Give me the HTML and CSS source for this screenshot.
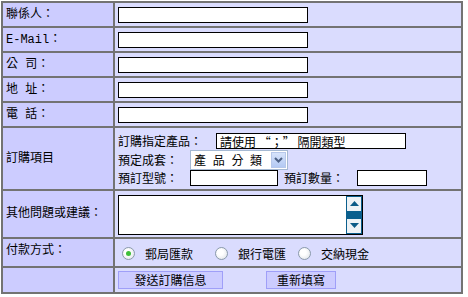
FILE: index.html
```html
<!DOCTYPE html>
<html lang="zh-Hant">
<head>
    <meta charset="UTF-8">
    <title>訂購表單</title>
    <link rel="stylesheet" href="styles.css">
</head>
<body>
    <table class="order-form">
        <tr>
            <td class="label">聯係人：</td>
            <td class="field"><input type="text" class="text-input wide"></td>
        </tr>
        <tr>
            <td class="label">E-Mail：</td>
            <td class="field"><input type="text" class="text-input wide"></td>
        </tr>
        <tr>
            <td class="label">公&nbsp;司：</td>
            <td class="field"><input type="text" class="text-input wide"></td>
        </tr>
        <tr>
            <td class="label">地&nbsp;址：</td>
            <td class="field"><input type="text" class="text-input wide"></td>
        </tr>
        <tr>
            <td class="label">電&nbsp;話：</td>
            <td class="field"><input type="text" class="text-input wide"></td>
        </tr>
        <tr>
            <td class="label">訂購項目</td>
            <td class="field items">
                <div class="item-line">
                    <span class="item-name">訂購指定產品：</span>
                    <input type="text" class="text-input product" value="請使用 “；” 隔開類型">
                </div>
                <div class="item-line">
                    <span class="item-name short">預定成套：</span>
                    <div class="dropdown">
                        <span class="dropdown-text">產 品 分 類</span>
                        <span class="dropdown-arrow">
                            <svg width="9" height="6" viewBox="0 0 9 6"><path d="M1 1 L4.5 4.5 L8 1" fill="none" stroke="#4d6185" stroke-width="2"/></svg>
                        </span>
                    </div>
                </div>
                <div class="item-line">
                    <span class="item-name short">預訂型號：</span>
                    <input type="text" class="text-input model">
                    <span class="item-name qty-label">預訂數量：</span>
                    <input type="text" class="text-input qty">
                </div>
            </td>
        </tr>
        <tr class="notes-row">
            <td class="label">其他問題或建議：</td>
            <td class="field">
                <div class="notes">
                    <textarea class="notes-text"></textarea>
                    <div class="scrollbar">
                        <span class="scroll-btn"><svg width="9" height="5" viewBox="0 0 9 5"><path d="M0 5 L4.5 0 L9 5 Z" fill="#0b5b86"/></svg></span>
                        <span class="scroll-btn"><svg width="9" height="5" viewBox="0 0 9 5"><path d="M0 0 L4.5 5 L9 0 Z" fill="#0b5b86"/></svg></span>
                    </div>
                </div>
            </td>
        </tr>
        <tr class="pay-row">
            <td class="label">付款方式：</td>
            <td class="field">
                <div class="pay-options">
                    <label class="pay-option first"><span class="radio checked"></span>郵局匯款</label>
                    <label class="pay-option"><span class="radio"></span>銀行電匯</label>
                    <label class="pay-option"><span class="radio"></span>交納現金</label>
                </div>
            </td>
        </tr>
        <tr class="btn-row">
            <td class="label"></td>
            <td class="field">
                <div class="buttons">
                    <button class="form-btn send">發送訂購信息</button>
                    <button class="form-btn reset">重新填寫</button>
                </div>
            </td>
        </tr>
    </table>
</body>
</html>
```

FILE: styles.css
```css
body {
    margin: 1px;
    font-family: "Liberation Mono", "Noto Sans CJK TC", monospace;
    font-size: 12px;
    color: #000;
    background: #fff;
}
.order-form {
    width: 462px;
    border: 1px solid #737373;
    border-spacing: 0;
}
.order-form td {
    border: 1px solid #737373;
    height: 23px;
    padding: 0;
}
.label {
    width: 107px;
    background-color: #ccccff;
    padding-left: 3px !important;
    line-height: 16px;
}
.field {
    background-color: #dadcfe;
    padding-left: 3px !important;
}
.text-input {
    box-sizing: border-box;
    height: 16px;
    border: 1px solid #000;
    padding: 0 3px;
    margin: 0;
    font-family: "Noto Sans CJK TC", sans-serif;
    font-size: 12px;
    background: #fff;
    display: block;
}
.wide {
    width: 190px;
}
.items {
    padding-top: 5px !important;
    padding-bottom: 3px !important;
}
.item-line {
    display: flex;
    align-items: center;
    line-height: 16px;
}
.item-name {
    font-family: "Noto Sans CJK TC", sans-serif;
    width: 98px;
}
.item-name.short {
    width: 72px;
}
.product {
    width: 190px;
    line-height: 14px;
}
.dropdown {
    box-sizing: border-box;
    display: flex;
    align-items: center;
    width: 98px;
    height: 20px;
    margin: 1px 0 0;
    border: 1px solid #a5b9d3;
    background: #fff;
}
.dropdown-text {
    flex: 1;
    padding-left: 3px;
    letter-spacing: 2px;
    word-spacing: 0;
    white-space: nowrap;
    overflow: hidden;
    font-family: "Noto Sans CJK TC", sans-serif;
}
.dropdown-arrow {
    display: flex;
    align-items: center;
    justify-content: center;
    flex: none;
    width: 15px;
    height: 16px;
    margin-right: 1px;
    background: linear-gradient(#d6e3fb, #b3c9f3);
    border: 1px solid #b7c8ea;
    box-sizing: border-box;
}
.model {
    width: 88px;
    margin-right: 6px;
}
.qty-label {
    width: 73px;
}
.qty {
    width: 70px;
}
.notes-row td {
    height: 46px;
}
.notes {
    display: flex;
    width: 245px;
    height: 40px;
    box-sizing: border-box;
    border: 1px solid #000;
    margin-top: 1px;
}
.notes-text {
    flex: 1;
    border: none;
    margin: 0;
    padding: 0;
    resize: none;
    background: #fff;
}
.scrollbar {
    width: 16px;
    background: #0b5f8d;
    display: flex;
    flex-direction: column;
    justify-content: space-between;
    padding: 1px;
    box-sizing: border-box;
}
.scroll-btn {
    display: flex;
    align-items: center;
    justify-content: center;
    height: 14px;
    background: #eef2f5;
}
.pay-row td {
    height: 23px;
}
.pay-row .label {
    vertical-align: top;
    padding-top: 4px !important;
}
.pay-options {
    display: flex;
    align-items: center;
    padding-left: 4px;
    padding-top: 2px;
    font-family: "Noto Sans CJK TC", sans-serif;
}
.pay-option {
    display: flex;
    align-items: center;
    margin-right: 12px;
}
.pay-option.first {
    margin-right: 22px;
}
.radio {
    box-sizing: border-box;
    width: 13px;
    height: 13px;
    border-radius: 50%;
    border: 1px solid #8a9aab;
    background: radial-gradient(circle at 40% 40%, #fff 30%, #d9dde3 100%);
    margin-right: 10px;
    display: flex;
    align-items: center;
    justify-content: center;
}
.radio.checked::after {
    content: "";
    width: 5px;
    height: 5px;
    border-radius: 50%;
    background: #3fbf3a;
}
.btn-row td {
    height: 24px;
}
.buttons {
    display: flex;
    gap: 43px;
}
.form-btn {
    box-sizing: border-box;
    height: 18px;
    padding: 0;
    border: 1px solid #9f9ff8;
    background: #ccccff;
    font-family: "Noto Sans CJK TC", sans-serif;
    font-size: 12px;
    line-height: 14px;
    color: #000;
}
.send {
    width: 105px;
}
.reset {
    width: 70px;
}
```
